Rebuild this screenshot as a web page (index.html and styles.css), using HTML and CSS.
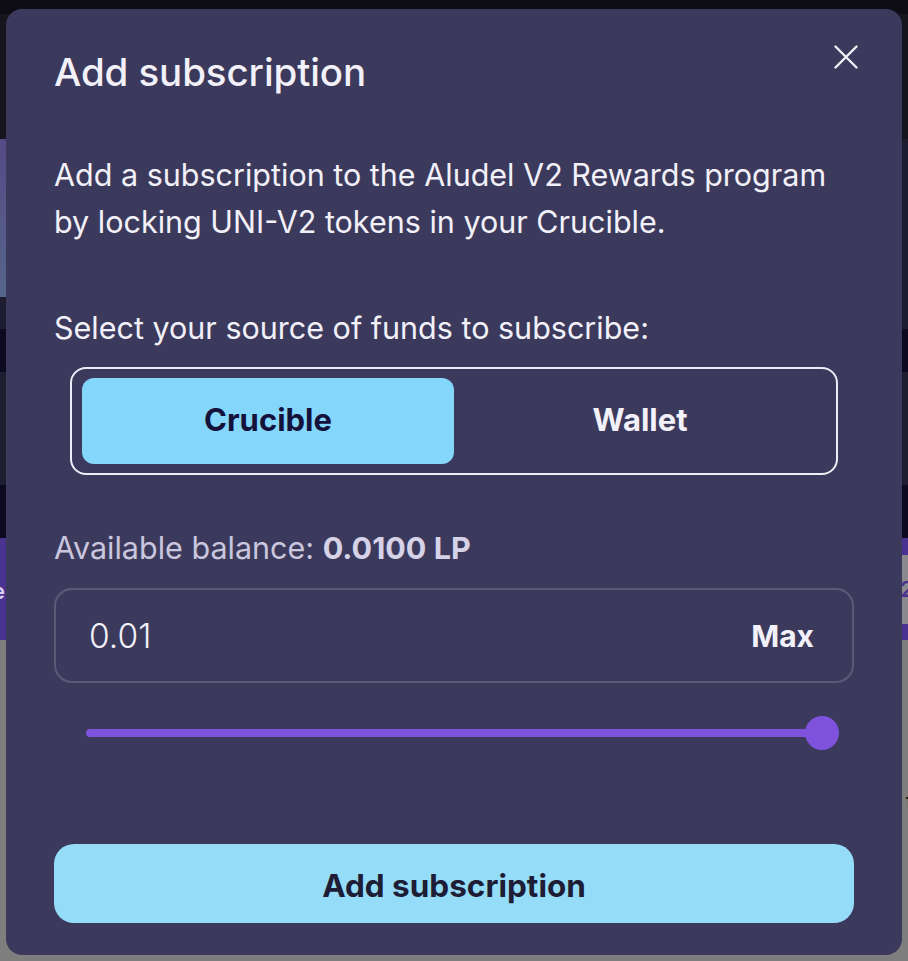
FILE: index.html
```html
<!DOCTYPE html>
<html lang="en">
<head>
<meta charset="utf-8">
<title>Add subscription</title>
<link rel="stylesheet" href="styles.css">
</head>
<body>
<div class="page">
  <div class="band band-top"></div>
  <div class="band band-dark1"></div>
  <div class="band band-hero"></div>
  <div class="band band-dark2"></div>
  <div class="band band-darker"></div>
  <div class="band band-dark3"></div>
  <div class="band band-darker2"></div>
  <div class="band band-purple"><span class="edge-l">e</span><span class="edge-r">2</span></div>
  <div class="band band-gray"><span class="edge-r2">f</span></div>
</div>

<div class="modal" role="dialog" aria-labelledby="modal-title">
  <div class="modal-header">
    <h2 id="modal-title" class="modal-title">Add subscription</h2>
    <button class="close-btn" aria-label="Close">
      <svg width="24" height="24" viewBox="0 0 24 24" fill="none" stroke="#f2f0f8" stroke-width="2.4" stroke-linecap="round"><path d="M1.5 1.5 L22.5 22.5 M22.5 1.5 L1.5 22.5"/></svg>
    </button>
  </div>
  <p class="desc">Add a subscription to the Aludel V2 Rewards program by locking UNI-V2 tokens in your Crucible.</p>
  <p class="label">Select your source of funds to subscribe:</p>
  <div class="toggle">
    <button class="toggle-opt active">Crucible</button>
    <button class="toggle-opt">Wallet</button>
  </div>
  <p class="balance">Available balance: <strong>0.0100 LP</strong></p>
  <div class="amount">
    <span class="amount-value">0.01</span>
    <span class="amount-max">Max</span>
  </div>
  <div class="slider">
    <div class="slider-track"></div>
    <div class="slider-thumb"></div>
  </div>
  <button class="submit">Add subscription</button>
</div>
</body>
</html>
```

FILE: styles.css
```css
* { box-sizing: border-box; }
html, body { margin: 0; padding: 0; }
body {
  width: 908px;
  height: 961px;
  overflow: hidden;
  background: #7e7e7e;
  font-family: Inter, "Noto Sans", sans-serif;
  position: relative;
}
.page { display: flex; flex-direction: column; }
.band { width: 100%; position: relative; }
.band-top { height: 14px; background: #0e0d16; }
.band-dark1 { height: 125px; background: #17161f; }
.band-hero {
  height: 158px;
  background:
    linear-gradient(to right, transparent 0 50%, #1e1c30 50%),
    linear-gradient(180deg, #564a86, #55658a);
}
.band-dark2 { height: 32px; background: #1e1c30; }
.band-darker { height: 43px; background: #0c0920; }
.band-dark3 { height: 113px; background: #1f1d30; }
.band-darker2 { height: 53px; background: #0c0920; }
.band-purple { height: 102px; background: #4a3290; color: #d8d0f0; font: 600 22px Inter, sans-serif; }
.band-gray { height: 321px; background: #7e7e7e; color: #1a1a1a; font: 500 22px Inter, sans-serif; }
.edge-l { position: absolute; left: -8px; top: 40px; }
.edge-r {
  position: absolute;
  right: 0;
  top: 17px;
  width: 20px;
  height: 69px;
  background: #8a8a8e;
  color: #4a3290;
  text-indent: 12px;
  line-height: 69px;
  overflow: hidden;
}
.edge-r2 { position: absolute; right: -6px; top: 148px; }

.modal {
  position: absolute;
  left: 6px;
  top: 9px;
  width: 896px;
  height: 946px;
  background: #3c3a5c;
  border-radius: 16px;
  padding: 38px 48px 32px 48px;
  color: #f2f0f8;
  display: flex;
  flex-direction: column;
}
.modal-header {
  display: flex;
  justify-content: space-between;
  align-items: flex-start;
}
.modal-title {
  margin: 0;
  font-size: 38.5px;
  font-weight: 500;
  line-height: 50px;
  letter-spacing: -0.1px;
}
.close-btn {
  background: none;
  border: 0;
  padding: 0;
  margin: -2px -4px 0 0;
  width: 24px;
  height: 24px;
  display: block;
  cursor: pointer;
}
.close-btn svg { display: block; }

.desc {
  margin: 54px 0 0;
  font-size: 30.5px;
  line-height: 47px;
  font-weight: 400;
}
.label {
  margin: 59px 0 0;
  font-size: 30.5px;
  line-height: 47px;
}
.toggle {
  margin: 16px 16px 0 16px;
  height: 108px;
  border: 2px solid #eeecf5;
  border-radius: 16px;
  padding: 9px 10px;
  display: flex;
}
.toggle-opt {
  flex: 1;
  border: 0;
  background: transparent;
  border-radius: 12px;
  font-family: Inter, sans-serif;
  font-size: 31px;
  font-weight: 700;
  color: #f2f0f8;
  padding: 0 0 3px;
  cursor: pointer;
}
.toggle-opt.active {
  background: #84d6fa;
  color: #14123a;
}
.balance {
  margin: 55px 0 0;
  font-size: 30.5px;
  line-height: 36px;
  color: #c9c6de;
}
.balance strong { font-weight: 700; color: #d6d3e8; }
.amount {
  margin-top: 22px;
  height: 95px;
  border: 2px solid #5d5a78;
  border-radius: 18px;
  padding: 0 38px 0 33px;
  display: flex;
  align-items: center;
  justify-content: space-between;
}
.amount-value { font-size: 33.5px; font-weight: 300; color: #f2f0f8; }
.amount-max { font-size: 30px; font-weight: 700; color: #f2f0f8; }
.slider {
  margin: 33px 15px 0;
  height: 34px;
  position: relative;
  display: flex;
  align-items: center;
  padding: 0 17px;
}
.slider-track {
  flex: 1;
  height: 8px;
  border-radius: 4px;
  background: #7f52de;
}
.slider-thumb {
  position: absolute;
  right: 0;
  top: 0;
  width: 34px;
  height: 34px;
  border-radius: 50%;
  background: #7f52de;
}
.submit {
  margin-top: 94px;
  height: 79px;
  border: 0;
  border-radius: 20px;
  background: #94dcf8;
  color: #1e1d35;
  font-family: Inter, sans-serif;
  font-size: 31.5px;
  font-weight: 700;
  padding: 3px 0 0;
  cursor: pointer;
}
```
